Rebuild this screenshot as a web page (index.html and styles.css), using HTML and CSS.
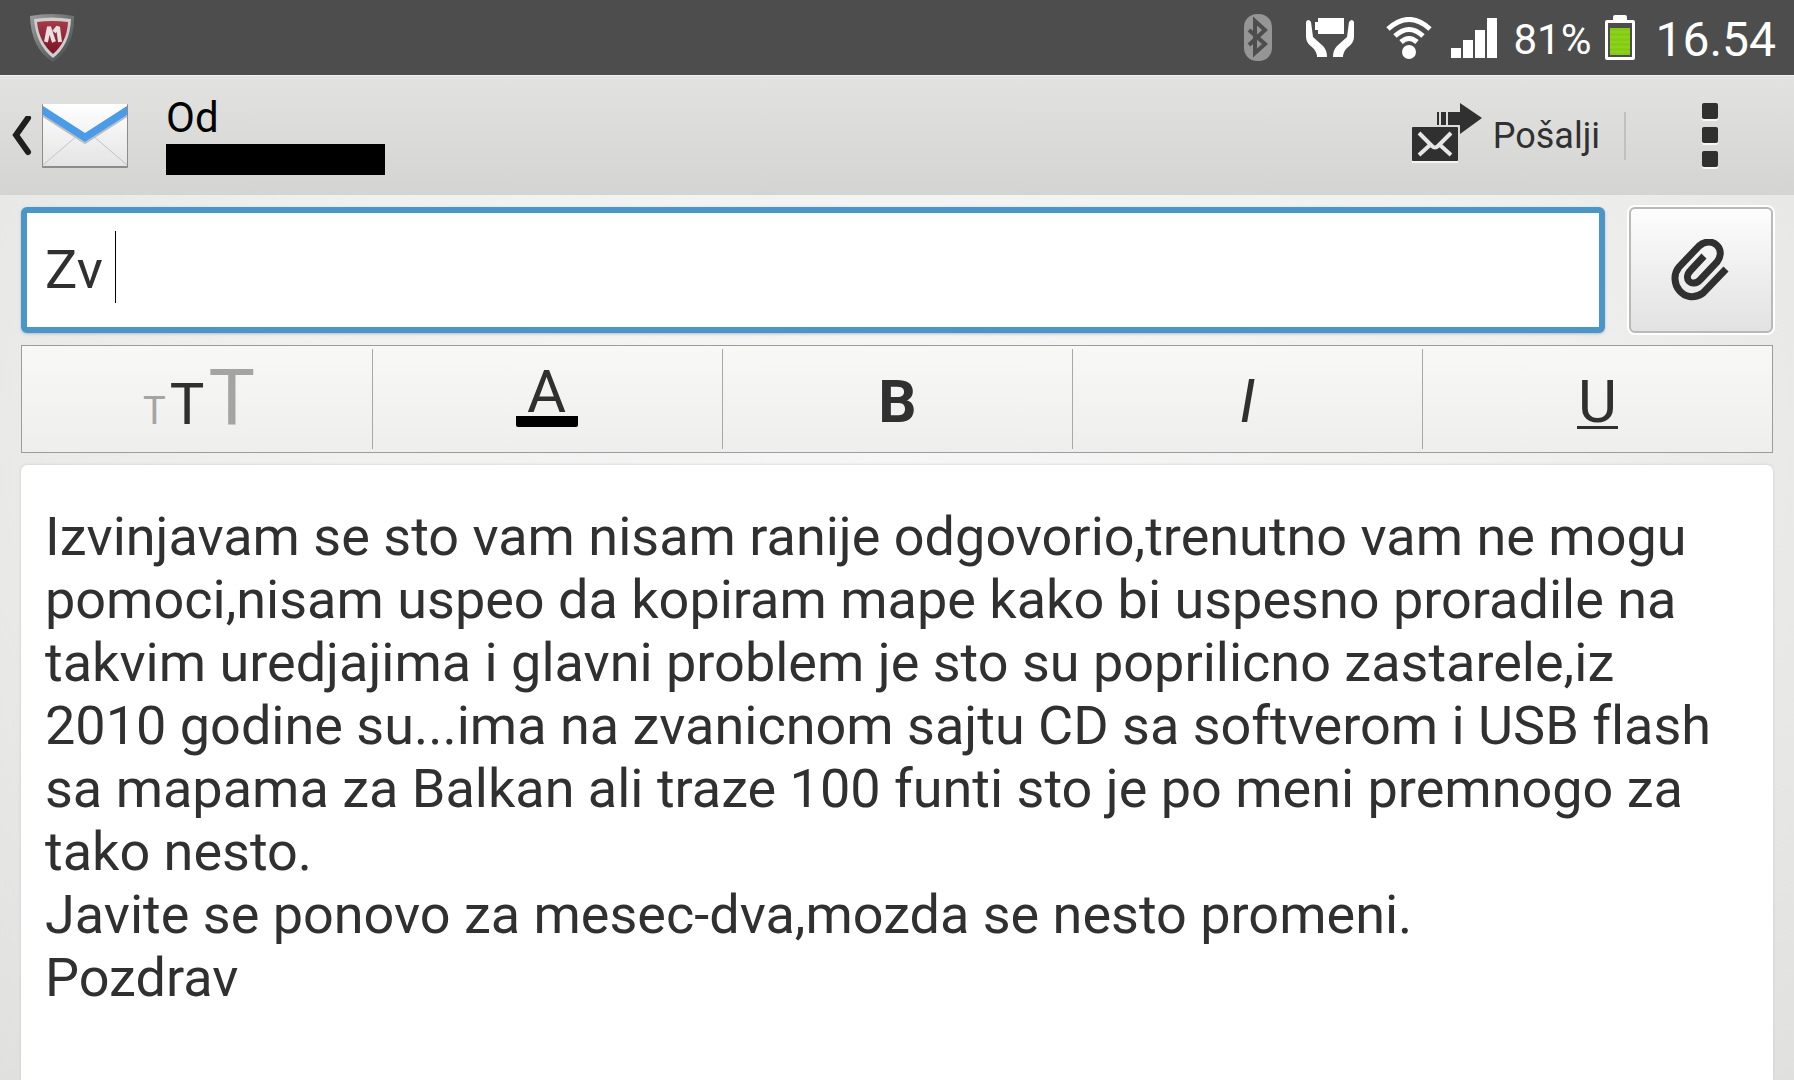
FILE: index.html
```html
<!DOCTYPE html>
<html lang="sr-Latn">

<head>
    <meta charset="UTF-8">
    <meta name="viewport" content="width=device-width, initial-scale=1.0">
    <title>Pošalji e-poštu</title>
    <link rel="stylesheet" href="styles.css">
</head>

<body>
    <div class="statusbar">
        <svg class="shield" width="46" height="50" viewBox="0 0 46 50">
            <defs>
                <linearGradient id="shieldEdge" x1="0" y1="0" x2="1" y2="1">
                    <stop offset="0" stop-color="#9a9f9e" />
                    <stop offset="1" stop-color="#3f4848" />
                </linearGradient>
                <linearGradient id="shieldRed" x1="0" y1="0" x2="0" y2="1">
                    <stop offset="0" stop-color="#a53a48" />
                    <stop offset="1" stop-color="#7a1226" />
                </linearGradient>
            </defs>
            <path d="M1 3Q23-1 45 3Q46 34 24 49Q2 36 1 3Z" fill="url(#shieldEdge)" />
            <path d="M5 6Q23 3 42 6Q41 32 24 45Q7 32 5 6Z" fill="#d2cccd" />
            <path d="M8 9Q23 7 39 9Q38 29 24 41Q10 29 8 9Z" fill="url(#shieldRed)" />
            <path d="M17 29L20 14L25 29M25 19L29 14L31 29" fill="none" stroke="#e8dfe0" stroke-width="4" stroke-linejoin="bevel" />
        </svg>
        <div class="indicators">
            <svg class="bluetooth" width="28" height="47" viewBox="0 0 28 47">
                <rect width="28" height="47" rx="13" fill="#959595" />
                <path d="M5 16L21 30L11 39V7L21 16L5 31" fill="none" stroke="#4d4d4d" stroke-width="4" />
            </svg>
            <svg class="saver" width="48" height="39" viewBox="0 0 48 39" fill="#fff">
                <path d="M12 0H38V16H12V12H9V4H12Z" />
                <path d="M0 4Q2 0 5 4L7 19L17 28Q21 32 21 39H11Q11 34 7 30Q0 25 0 19Z" />
                <path d="M48 4Q46 0 43 4L41 19L31 28Q27 32 27 39H37Q37 34 41 30Q48 25 48 19Z" />
            </svg>
            <svg class="wifi" width="46" height="42" viewBox="0 0 46 42" fill="none" stroke="#fff" stroke-width="5">
                <path d="M2 12Q23-7 44 12" />
                <path d="M9 19Q23 6 37 19" />
                <path d="M15 25Q23 18 31 25" />
                <circle cx="23" cy="35" r="7" fill="#fff" stroke="none" />
            </svg>
            <svg class="signal" width="46" height="40" viewBox="0 0 46 40" fill="#fff">
                <path d="M0 30H10V40H0ZM12 22H22V40H12ZM24 12H34V40H24ZM36 0H46V40H36Z" />
            </svg>
            <span class="percent">81%</span>
            <svg class="battery" width="30" height="45" viewBox="0 0 30 45">
                <path d="M8 5V2Q8 0 10 0H20Q22 0 22 2V5H28Q30 5 30 7V43Q30 45 28 45H2Q0 45 0 43V7Q0 5 2 5ZM3 8V42H27V8Z" fill="#fff" fill-rule="evenodd" />
                <rect x="5" y="13" width="20" height="27" fill="#84cb12" />
                <path d="M5 17H25M5 22H25M5 27H25M5 32H25M5 37H25" stroke="#95d82c" />
            </svg>
            <span class="clock">16.54</span>
        </div>
    </div>

    <header class="header">
        <button class="back" type="button" aria-label="Nazad">
            <svg width="20" height="40" viewBox="0 0 20 40">
                <path d="M16 2L4 19L16 36" fill="none" stroke="#1f1f1f" stroke-width="6" stroke-linecap="round" />
            </svg>
            <svg class="mail" width="86" height="66" viewBox="0 0 86 66">
                <defs>
                    <linearGradient id="paper" x1="0" y1="0" x2="0" y2="1">
                        <stop offset="0" stop-color="#fff" />
                        <stop offset="1" stop-color="#e4e4e4" />
                    </linearGradient>
                </defs>
                <rect x="0" y="1" width="86" height="64" rx="1" fill="#8c8c8c" />
                <rect x="1" y="1" width="84" height="62" fill="url(#paper)" />
                <path d="M1 62L36 32M85 62L50 32" stroke="#c4c4c4" />
                <path d="M1 13L43 40L85 13" fill="none" stroke="#bdbdbd" stroke-width="2" />
                <path d="M1 3L43 30L85 3V12L43 39L1 12Z" fill="#4a9be8" />
            </svg>
        </button>
        <div class="from">
            <span class="label">Od</span>
            <span class="address"></span>
        </div>
        <button class="send" type="button">
            <svg width="71" height="60" viewBox="0 0 71 60">
                <path d="M0 58H46V60H0Z" fill="#f5f5f5" />
                <path d="M25 9H27V22H25ZM29 9H34V22H29ZM36 9H48V0L70 15L48 31V22H36Z" fill="#303030" />
                <rect y="24" width="46" height="34" rx="1" fill="#303030" />
                <path d="M7 30L20 43Q23 46 26 43L39 30M7 52L18 42M39 52L28 42" fill="none" stroke="#e6e6e6" stroke-width="4" />
            </svg>
            <span>Pošalji</span>
        </button>
        <button class="menu" type="button" aria-label="Još opcija">
            <i></i>
            <i></i>
            <i></i>
        </button>
    </header>

    <main class="compose">
        <div class="subject-row">
            <div class="subject">
                <input type="text" id="subject" aria-label="Naslov" value="Zv">
                <span class="cursor"></span>
            </div>
            <button class="attach" type="button" aria-label="Dodaj prilog">
                <svg width="60" height="62" viewBox="0 0 60 62">
                    <path d="M33 17L20 31C11 40 21 49 29 41L46 23C56 10 41-4 28 7L8 28C-4 43 13 67 32 54L55 30" fill="none" stroke="#303030" stroke-width="7" />
                </svg>
            </button>
        </div>

        <div class="toolbar">
            <button type="button" class="size" aria-label="Veličina teksta">
                <span class="small">T</span>
                <span class="medium">T</span>
                <span class="large">T</span>
            </button>
            <button type="button" class="color" aria-label="Boja teksta">
                <span>A</span>
            </button>
            <button type="button" class="bold">B</button>
            <button type="button" class="italic">I</button>
            <button type="button" class="underline"><span>U</span></button>
        </div>

        <textarea class="message" aria-label="Poruka" spellcheck="false">Izvinjavam se sto vam nisam ranije odgovorio,trenutno vam ne mogu pomoci,nisam uspeo da kopiram mape kako bi uspesno proradile na takvim uredjajima i glavni problem je sto su poprilicno zastarele,iz 2010 godine su...ima na zvanicnom sajtu CD sa softverom i USB flash sa mapama za Balkan ali traze 100 funti sto je po meni premnogo za tako nesto.
Javite se ponovo za mesec-dva,mozda se nesto promeni.
Pozdrav</textarea>
    </main>
</body>

</html>
```
FILE: styles.css
```css
* {
    box-sizing: border-box;
}

body {
    font-family: Roboto, sans-serif;
    color: #303030;
    background: radial-gradient(ellipse at 50% 40%, #f6f6f6 0%, #f0f0ef 50%, #e0e0de 100%);
    margin: 0;
    display: flex;
    flex-direction: column;
    height: 100vh;
}

button,
input,
textarea {
    font-family: inherit;
    color: inherit;
    margin: 0;
    padding: 0;
    border: none;
    outline: none;
}

button {
    background: none;
    cursor: pointer;
}

svg {
    display: block;
    flex: none;
}

/* status bar */

.statusbar {
    height: 75px;
    flex: none;
    padding: 0 18px 0 29px;
    background-color: #4d4d4d;
    color: #fff;
    display: flex;
    justify-content: space-between;
    align-items: center;
}

.indicators {
    display: flex;
    align-items: center;
}

.saver {
    margin-left: 34px;
}

.wifi {
    margin-left: 32px;
}

.signal {
    margin-left: 19px;
}

.percent {
    font-size: 42px;
    line-height: 48px;
    padding-top: 4px;
    margin-left: 16px;
}

.battery {
    margin-left: 14px;
}

.clock {
    font-size: 48px;
    line-height: 56px;
    padding-top: 4px;
    margin-left: 20px;
}

/* header */

.header {
    height: 120px;
    flex: none;
    padding-left: 12px;
    background: linear-gradient(#e2e2e0, #d4d4d2);
    border-top: 1px solid #f2f2f2;
    display: flex;
    align-items: center;
}

.back {
    display: flex;
    align-items: center;
    gap: 10px;
}

.from {
    flex: 1;
    margin-left: 38px;
    padding-bottom: 2px;
    color: #000;
}

.label {
    display: block;
    font-size: 42px;
    line-height: 48px;
    padding-bottom: 2px;
}

.address {
    display: block;
    width: 219px;
    height: 31px;
    background-color: #000;
}

.send {
    display: flex;
    align-items: center;
    gap: 10px;
    height: 48px;
    padding-right: 24px;
    border-right: 2px solid #c0c0be;
    font-size: 36px;
    line-height: 42px;
}

.send svg {
    margin-top: -6px;
}

.menu {
    width: 168px;
    padding-bottom: 2px;
    display: flex;
    flex-direction: column;
    align-items: center;
    gap: 8px;
}

.menu i {
    width: 16px;
    height: 16px;
    border-radius: 2px;
    background-color: #303030;
    box-shadow: 0 2px 0 #f8f8f8;
}

/* compose form */

.compose {
    flex: 1;
    min-height: 0;
    padding: 12px 21px 0;
    display: flex;
    flex-direction: column;
    gap: 12px;
}

.subject-row {
    display: flex;
    gap: 24px;
    height: 126px;
    flex: none;
}

.subject {
    flex: 1;
    position: relative;
}

.subject input {
    width: 100%;
    height: 100%;
    padding: 0 18px 2px;
    background-color: #fff;
    border: 6px solid #4b96c9;
    border-radius: 6px;
    box-shadow: 0 1px 3px #b5bcc0;
    font-size: 54px;
}

.cursor {
    position: absolute;
    left: 94px;
    top: 24px;
    width: 1px;
    height: 72px;
    background-color: #000;
}

.attach {
    width: 144px;
    display: flex;
    justify-content: center;
    align-items: center;
    background: linear-gradient(#fdfdfd, #e2e2e2);
    border: 2px solid #b9b9b9;
    border-radius: 6px;
    box-shadow: 0 0 0 2px #fff;
}

.toolbar {
    display: grid;
    grid-template-columns: repeat(5, 1fr);
    height: 108px;
    flex: none;
    background: linear-gradient(#f8f8f6, #eeeeec);
    border: 1px solid #9c9c9c;
}

.toolbar button {
    font-size: 60px;
    line-height: 70px;
    margin: 3px 0;
    padding-top: 5px;
}

.toolbar button + button {
    border-left: 1px solid #a8a8a8;
}

.toolbar .size {
    display: flex;
    justify-content: center;
    align-items: baseline;
    gap: 4px;
    padding: 14px 0 0 4px;
}

.small {
    font-size: 38px;
    color: #a4a4a2;
}

.medium {
    font-size: 58px;
}

.large {
    font-size: 78px;
    color: #a4a4a2;
}

.toolbar .color {
    padding: 0 2px 6px 0;
}

.color span {
    display: block;
    width: 62px;
    height: 62px;
    margin: 0 auto;
    line-height: 54px;
    border-bottom: 11px solid #000;
    border-radius: 2px;
}

.toolbar .bold {
    font-weight: bold;
}

.toolbar .italic {
    font-style: italic;
}

.underline span {
    display: inline-block;
    height: 62px;
    padding: 0 1px;
    border-bottom: 3px solid #303030;
}

.message {
    flex: 1;
    min-height: 0;
    padding: 40px 36px 0 24px;
    background-color: #fff;
    border-radius: 6px 6px 0 0;
    box-shadow: 0 0 3px #c8c8c8;
    font-size: 54px;
    line-height: 63px;
    font-variant-ligatures: none;
    resize: none;
    overflow: hidden;
}
```
